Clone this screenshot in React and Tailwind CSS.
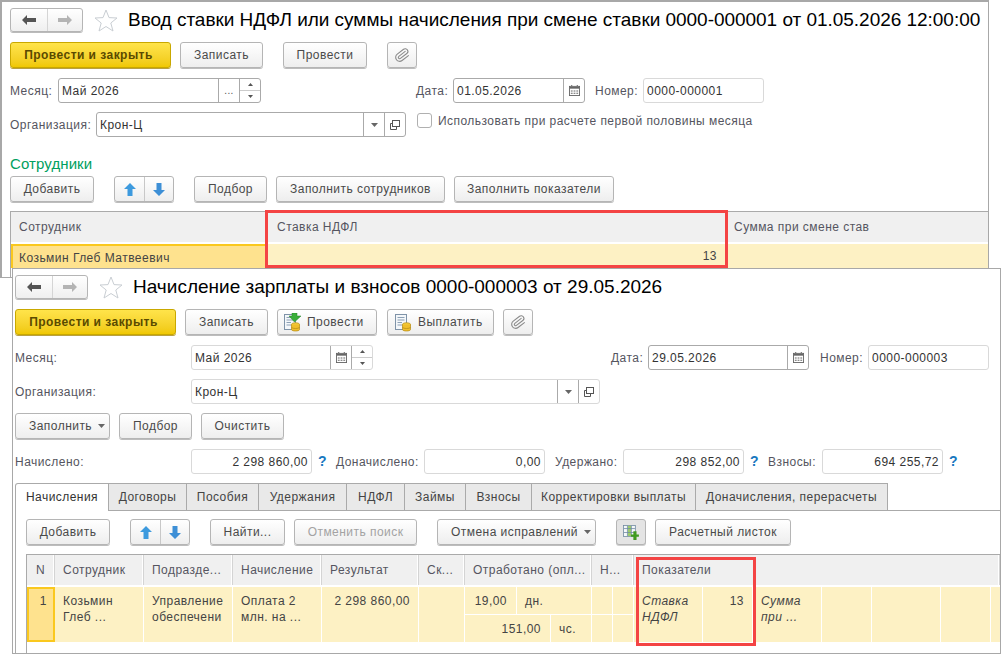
import React from 'react';
import { Paperclip } from 'lucide-react';

const NavArrows = () => (
  <div className="flex h-[24px] w-[73px] rounded-[3px] border border-[#b5b5b5] bg-linear-to-b from-white to-[#efefef] shadow-[0_1px_0_#bbb]">
    <div className="flex w-[37px] items-center justify-center border-r border-[#d5d5d5]">
      <svg width="14" height="10" viewBox="0 0 14 10"><path d="M0 5 L5 0 V3 H14 V7 H5 V10 Z" fill="#555" /></svg>
    </div>
    <div className="flex flex-1 items-center justify-center">
      <svg width="14" height="10" viewBox="0 0 14 10"><path d="M14 5 L9 0 V3 H0 V7 H9 V10 Z" fill="#b4b4b4" /></svg>
    </div>
  </div>
);

const Star = () => (
  <svg width="24" height="23" viewBox="0 0 24 23" className="shrink-0">
    <path d="M12 1 L15 8.6 L23 9 L16.8 14 L19 22 L12 17.5 L5 22 L7.2 14 L1 9 L9 8.6 Z" fill="#fff" stroke="#c9ced3" strokeWidth="1" />
  </svg>
);

const Btn = ({ className = '', children, disabled }) => (
  <button
    className={`flex h-[26px] shrink-0 items-center justify-center rounded-[3px] border border-[#b5b5b5] bg-linear-to-b from-white to-[#eeeeee] shadow-[0_1px_0_#bdbdbd] ${disabled ? 'text-[#a3a3a3]' : 'text-[#4a4a4a]'} ${className}`}
  >
    {children}
  </button>
);

const Primary = ({ className = '' }) => (
  <button className={`flex h-[26px] w-[161px] shrink-0 items-center justify-center rounded-[3px] border border-[#c9a800] bg-linear-to-b from-[#ffe44a] to-[#f0c800] pr-[4px] font-bold text-[#5a4a00] shadow-[0_1px_0_#b9a040] ${className}`}>
    Провести и закрыть
  </button>
);

const Clip = ({ className = '' }) => (
  <Btn className={`w-[30px] ${className}`}>
    <Paperclip size={16} strokeWidth={1.6} color="#8a8a8a" className="rotate-[8deg]" />
  </Btn>
);

const Calendar = () => (
  <svg width="11" height="11" viewBox="0 0 12 12">
    <path d="M2.5 0h1v2h-1zM8.5 0h1v2h-1z" fill="#555" />
    <rect x="0.5" y="1.5" width="11" height="10" fill="#fff" stroke="#666" />
    <rect x="1" y="2" width="10" height="2" fill="#666" />
    <path d="M2 6h2v1H2zM5 6h2v1H5zM8 6h2v1H8zM2 8.500h2v1H2zM5 8.500h2v1H5zM8 8.500h2v1H8z" fill="#666" />
  </svg>
);

const Caret = () => (
  <svg width="7" height="4" viewBox="0 0 7 4" className="shrink-0"><path d="M0 0H7L3.500 4Z" fill="#666" /></svg>
);

const OpenIcon = () => (
  <svg width="10" height="10" viewBox="0 0 10 10" fill="none" stroke="#555">
    <rect x="2.500" y="0.500" width="7" height="6" />
    <path d="M2.500 3.500H0.500V9.500H6.500V6.500" />
  </svg>
);

const Spin = () => (
  <div className="flex w-[21px] flex-col border-l border-[#aaaaaa]">
    <div className="flex flex-1 items-center justify-center border-b border-[#cccccc]">
      <svg width="5" height="3" viewBox="0 0 5 3"><path d="M0 3H5L2.500 0Z" fill="#555" /></svg>
    </div>
    <div className="flex flex-1 items-center justify-center">
      <svg width="5" height="3" viewBox="0 0 5 3"><path d="M0 0H5L2.500 3Z" fill="#555" /></svg>
    </div>
  </div>
);

const Slot = ({ children }) => (
  <div className="flex w-[21px] items-center justify-center border-l border-[#aaaaaa]">{children}</div>
);

const Field = ({ className = '', value, dark, right, children }) => (
  <div className={`flex h-[25px] shrink-0 rounded-[3px] border bg-white ${dark ? 'border-[#aaaaaa]' : 'border-[#d9d9d9]'} ${className}`}>
    <div className={`flex-1 truncate px-[3px] leading-[24px] text-[#333333] ${right ? 'text-right' : ''}`}>{value}</div>
    {children}
  </div>
);

const Arrows = ({ className = '' }) => (
  <div className={`flex h-[26px] w-[60px] shrink-0 rounded-[3px] border border-[#b5b5b5] bg-linear-to-b from-white to-[#eeeeee] shadow-[0_1px_0_#bdbdbd] ${className}`}>
    <div className="flex w-[30px] items-center justify-center border-r border-[#c8c8c8]">
      <svg width="12" height="13" viewBox="0 0 12 13"><path d="M6 0 L12 6 H8.500 V13 H3.500 V6 H0 Z" fill="#3d9ade" /></svg>
    </div>
    <div className="flex flex-1 items-center justify-center">
      <svg width="12" height="13" viewBox="0 0 12 13"><path d="M6 13 L12 7 H8.500 V0 H3.500 V7 H0 Z" fill="#3d8fd6" /></svg>
    </div>
  </div>
);

const DocIcon = ({ green }) => (
  <svg width="17" height="19" viewBox="0 0 17 19" className="shrink-0">
    <rect x="0.500" y="1.500" width="11" height="15" fill="#f4f7fa" stroke="#7f93a8" />
    <path d="M2.500 4.500H9.500M2.500 7H9.500M2.500 9.500H7M2.500 12H7" stroke="#8ca0b5" />
    {green && <path d="M6 0H11V3H15L8.500 9L3 3H6Z" transform="translate(2 0)" fill="#3aae3a" stroke="#24802a" strokeWidth="0.500" />}
    <ellipse cx="11.500" cy="11.500" rx="4" ry="1.800" fill="#f5cc3a" stroke="#b58a14" strokeWidth="0.700" />
    <path d="M7.500 11.500V16.500C7.500 18.500 15.500 18.500 15.500 16.500V11.500" fill="#efbe2c" stroke="#b58a14" strokeWidth="0.700" />
    <path d="M7.500 14C7.500 16 15.500 16 15.500 14" fill="none" stroke="#b58a14" strokeWidth="0.700" />
  </svg>
);

const TableAddIcon = () => (
  <svg width="16" height="15" viewBox="0 0 20 19">
    <rect x="0.500" y="0.500" width="15" height="14" fill="#f4f7fa" stroke="#6f8aa0" />
    <rect x="6" y="1" width="4" height="13" fill="#9ccb6a" />
    <path d="M1 4.500H15M5.500 1V14M10.500 1V14M1 9.500H15" stroke="#6f8aa0" />
    <path d="M13 8H17V12H20V15H17V19H13V15H10V12H13Z" fill="#3f9a1f" />
  </svg>
);

const Label = ({ className = '', children }) => (
  <div className={`h-[25px] shrink-0 leading-[26px] text-[#555560] ${className}`}>{children}</div>
);

const Help = ({ className = '' }) => (
  <div className={`w-[10px] shrink-0 text-[14px] leading-[25px] font-bold text-[#1878c0] ${className}`}>?</div>
);

const tabs = [
  { name: 'Начисления', w: 'w-[94px]', active: true },
  { name: 'Договоры', w: 'w-[78px]' },
  { name: 'Пособия', w: 'w-[72px]' },
  { name: 'Удержания', w: 'w-[88px]' },
  { name: 'НДФЛ', w: 'w-[58px]' },
  { name: 'Займы', w: 'w-[61px]' },
  { name: 'Взносы', w: 'w-[66px]' },
  { name: 'Корректировки выплаты', w: 'w-[164px]' },
  { name: 'Доначисления, перерасчеты', w: 'w-[192px]' },
];

const heads = [
  { name: 'N', w: 'w-[28px]', center: true },
  { name: 'Сотрудник', w: 'w-[89px]' },
  { name: 'Подразде...', w: 'w-[89px]' },
  { name: 'Начисление', w: 'w-[89px]' },
  { name: 'Результат', w: 'w-[97px]' },
  { name: 'Ск...', w: 'w-[46px]' },
  { name: 'Отработано (опл...', w: 'w-[127px]' },
  { name: 'Н...', w: 'w-[42px]' },
  { name: 'Показатели', w: 'flex-1' },
];

const Line = ({ children, className = '' }) => (
  <div className={`border-r border-white px-[8px] pt-[6px] leading-[16px] text-[#444444] ${className}`}>{children}</div>
);

export default function App() {
  return (
    <div className="relative h-[654px] w-[1001px] overflow-hidden bg-white font-['Liberation_Sans',Arial,sans-serif] text-[12px] tracking-[0.46px]">
      {/* задний документ */}
      <div className="absolute top-0 left-0 flex h-[278px] w-[989px] flex-col border-t-2 border-r border-b border-l-2 border-[#a8a8a8] bg-white pt-[6px] pl-[8px]">
        <div className="flex h-[24px] items-center">
          <NavArrows />
          <div className="ml-[11px]"><Star /></div>
          <div className="ml-[10px] text-[19px] leading-[24px] tracking-[-0.03px] whitespace-nowrap text-black">
            Ввод ставки НДФЛ или суммы начисления при смене ставки 0000-000001 от 01.05.2026 12:00:00
          </div>
        </div>
        <div className="mt-[10px] flex">
          <Primary />
          <Btn className="ml-[9px] w-[83px]">Записать</Btn>
          <Btn className="ml-[20px] w-[84px]">Провести</Btn>
          <Clip className="ml-[20px]" />
        </div>
        <div className="mt-[10px] flex">
          <Label className="w-[48px]">Месяц:</Label>
          <Field className="w-[203px]" value="Май 2026" dark>
            <Slot><span className="text-[10px] text-[#555555]">...</span></Slot>
            <Spin />
          </Field>
          <Label className="ml-[155px] w-[37px]">Дата:</Label>
          <Field className="w-[132px]" value="01.05.2026" dark>
            <Slot><Calendar /></Slot>
          </Field>
          <Label className="ml-[10px] w-[48px]">Номер:</Label>
          <Field className="w-[121px]" value="0000-000001" />
        </div>
        <div className="mt-[9px] flex">
          <Label className="w-[86px]">Организация:</Label>
          <Field className="w-[310px]" value="Крон-Ц" dark>
            <Slot><Caret /></Slot>
            <Slot><OpenIcon /></Slot>
          </Field>
          <div className="ml-[11px] mt-px h-[15px] w-[15px] shrink-0 rounded-[3px] border border-[#b0b0b0] bg-white" />
          <div className="ml-[6px] leading-[18px] whitespace-nowrap text-[#555560]">Использовать при расчете первой половины месяца</div>
        </div>
        <div className="mt-[17px] h-[20px] text-[15px] leading-[20px] tracking-[0.1px] text-[#00a060]">Сотрудники</div>
        <div className="mt-[2px] flex">
          <Btn className="w-[84px]">Добавить</Btn>
          <Arrows className="ml-[20px]" />
          <Btn className="ml-[20px] w-[73px]">Подбор</Btn>
          <Btn className="ml-[9px] w-[169px]">Заполнить сотрудников</Btn>
          <Btn className="ml-[9px] w-[160px]">Заполнить показатели</Btn>
        </div>
        <div className="relative mt-[9px] flex-1 border-t border-l border-[#aaaaaa]">
          <div className="flex h-[30px] bg-[#f0f0f0] leading-[30px] text-[#555560]">
            <div className="w-[257px] border-r border-[#d9d9d9] px-[8px]">Сотрудник</div>
            <div className="w-[459px] border-r border-[#d9d9d9] px-[9px]">Ставка НДФЛ</div>
            <div className="flex-1 px-[7px]">Сумма при смене став</div>
          </div>
          <div className="mt-[2px] flex h-[24px] bg-[#fdf1c4] text-[#444444]">
            <div className="w-[257px] border-t-2 border-l-2 border-[#fac81e] bg-[#fee28e] pl-[6px] leading-[24px]">Козьмин Глеб Матвеевич</div>
            <div className="w-[449px] pt-[4px] text-right leading-[16px]">13</div>
          </div>
          <div className="absolute -top-[2px] left-[254px] h-[58px] w-[463px] border-3 border-[#f44444]" />
        </div>
      </div>

      {/* передний документ */}
      <div className="absolute top-[268px] left-[12px] flex h-[386px] w-[989px] flex-col border border-[#a8a8a8] bg-white pt-[6px] pl-[2px]">
        <div className="flex h-[24px] items-center">
          <NavArrows />
          <div className="ml-[11px]"><Star /></div>
          <div className="ml-[10px] text-[19px] leading-[24px] tracking-normal whitespace-nowrap text-black">
            Начисление зарплаты и взносов 0000-000003 от 29.05.2026
          </div>
        </div>
        <div className="mt-[10px] flex">
          <Primary />
          <Btn className="ml-[9px] w-[83px]">Записать</Btn>
          <Btn className="ml-[9px] w-[100px] justify-start gap-[6px] pl-[6px]"><DocIcon green />Провести</Btn>
          <Btn className="ml-[10px] w-[107px] justify-start gap-[6px] pl-[7px]"><DocIcon />Выплатить</Btn>
          <Clip className="ml-[9px]" />
        </div>
        <div className="mt-[10px] flex">
          <Label className="w-[176px]">Месяц:</Label>
          <Field className="w-[182px]" value="Май 2026">
            <Slot><Calendar /></Slot>
            <Spin />
          </Field>
          <Label className="ml-[238px] w-[37px]">Дата:</Label>
          <Field className="w-[161px]" value="29.05.2026" dark>
            <Slot><Calendar /></Slot>
          </Field>
          <Label className="ml-[11px] w-[48px]">Номер:</Label>
          <Field className="w-[121px]" value="0000-000003" />
        </div>
        <div className="mt-[9px] flex">
          <Label className="w-[176px]">Организация:</Label>
          <Field className="w-[409px]" value="Крон-Ц">
            <Slot><Caret /></Slot>
            <Slot><OpenIcon /></Slot>
          </Field>
        </div>
        <div className="mt-[9px] flex">
          <Btn className="w-[95px] justify-start gap-[6px] pl-[13px]">Заполнить <Caret /></Btn>
          <Btn className="ml-[9px] w-[73px]">Подбор</Btn>
          <Btn className="ml-[9px] w-[83px]">Очистить</Btn>
        </div>
        <div className="mt-[10px] flex">
          <Label className="w-[176px]">Начислено:</Label>
          <Field className="w-[121px]" value="2 298 860,00" right />
          <Help className="ml-[6px]" />
          <Label className="ml-[8px] w-[88px]">Доначислено:</Label>
          <Field className="w-[121px]" value="0,00" right />
          <Label className="ml-[10px] w-[68px]">Удержано:</Label>
          <Field className="w-[121px]" value="298 852,00" right />
          <Help className="ml-[6px]" />
          <Label className="ml-[8px] w-[54px]">Взносы:</Label>
          <Field className="w-[121px]" value="694 255,72" right />
          <Help className="ml-[6px]" />
        </div>
        <div className="mt-[9px] flex h-[28px] border-b border-[#aaaaaa]">
          {tabs.map((t) => (
            <div
              key={t.name}
              className={`h-[27px] text-center leading-[27px] border-t border-r border-[#aaaaaa] first:rounded-tl-[3px] first:border-l ${t.w} ${t.active ? 'h-[28px] bg-white text-[#333333]' : 'bg-[#e9e9e9] text-[#444444]'}`}
            >
              {t.name}
            </div>
          ))}
        </div>
        <div className="flex flex-1 flex-col border-l border-[#aaaaaa] pt-[8px] pl-[10px]">
          <div className="flex">
            <Btn className="w-[84px]">Добавить</Btn>
            <Arrows className="ml-[20px]" />
            <Btn className="ml-[20px] w-[75px]">Найти...</Btn>
            <Btn className="ml-[9px] w-[123px]" disabled>Отменить поиск</Btn>
            <Btn className="ml-[20px] w-[159px] justify-start gap-[6px] pl-[13px]">Отмена исправлений <Caret /></Btn>
            <button className="ml-[20px] flex h-[26px] w-[30px] shrink-0 items-center justify-center rounded-[3px] border border-[#b5b5b5] bg-[#e4e4e4] shadow-[0_1px_0_#cfcfcf]">
              <TableAddIcon />
            </button>
            <Btn className="ml-[9px] w-[136px]">Расчетный листок</Btn>
          </div>
          <div className="relative mt-[9px] flex-1 border-t border-l border-[#aaaaaa]">
            <div className="flex h-[30px] leading-[30px] text-[#555560]">
              {heads.map((h) => (
                <div
                  key={h.name}
                  className={`truncate border-r border-[#d4d4d4] bg-[#f0f0f0] shadow-[inset_-1px_0_0_#fff] ${h.w} ${h.center ? 'text-center' : 'pl-[8px]'}`}
                >
                  {h.name}
                </div>
              ))}
            </div>
            <div className="mt-[2px] flex h-[55px] bg-[#fdf1c4]">
              <div className="w-[28px] border-2 border-[#fac81e] bg-[#fee28e] pt-[4px] pr-[6px] text-right leading-[16px] text-[#444444]">1</div>
              <Line className="w-[89px]">Козьмин<br />Глеб ...</Line>
              <Line className="w-[89px]">Управление<br />обеспечени</Line>
              <Line className="w-[89px]">Оплата 2<br />млн. на ...</Line>
              <Line className="w-[97px] text-right">2 298 860,00</Line>
              <Line className="w-[46px]" />
              <div className="flex w-[127px] flex-col border-r border-white text-[#444444]">
                <div className="flex h-[28px] border-b border-white">
                  <div className="w-[52px] border-r border-white pt-[6px] pr-[9px] text-right leading-[16px]">19,00</div>
                  <div className="pt-[6px] pl-[8px] leading-[16px]">дн.</div>
                </div>
                <div className="flex flex-1">
                  <div className="w-[86px] border-r border-white pt-[6px] pr-[9px] text-right leading-[16px]">151,00</div>
                  <div className="pt-[6px] pl-[8px] leading-[16px]">чс.</div>
                </div>
              </div>
              <div className="flex w-[42px] flex-col border-r border-white">
                <div className="flex h-[28px] border-b border-white"><div className="w-[21px] border-r border-white" /></div>
                <div className="flex flex-1"><div className="w-[21px] border-r border-white" /></div>
              </div>
              <Line className="w-[69px] italic">Ставка<br />НДФЛ</Line>
              <Line className="w-[50px] text-right">13</Line>
              <Line className="w-[69px] italic">Сумма<br />при ...</Line>
              <Line className="w-[50px]" />
              <Line className="w-[69px]" />
              <Line className="w-[50px]" />
            </div>
            <div className="absolute top-[2px] left-[609px] h-[89px] w-[120px] border-3 border-[#f44444]" />
          </div>
        </div>
      </div>
    </div>
  );
}
